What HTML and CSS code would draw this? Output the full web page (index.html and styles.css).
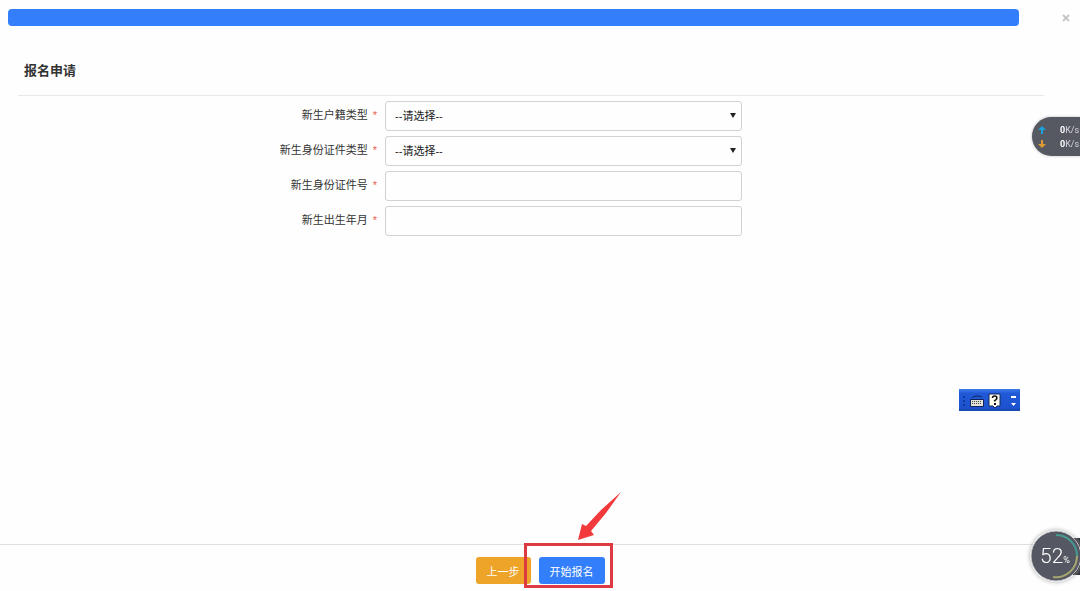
FILE: index.html
```html
<!DOCTYPE html>
<html lang="zh-CN">
<head>
  <meta charset="UTF-8">
  <meta name="viewport" content="width=device-width, initial-scale=1.0">
  <title>报名申请</title>
  <link rel="stylesheet" href="styles.css">
</head>
<body>
  <header class="topbar">
    <div class="progress"></div>
    <button type="button" class="close-btn" aria-label="关闭">
      <svg width="8" height="8" viewBox="0 0 8 8"><path d="M1 1L7 7M7 1L1 7" stroke="#c8c8c8" stroke-width="2"/></svg>
    </button>
  </header>

  <main class="content">
    <h1 class="title">报名申请</h1>
    <form class="apply-form" id="applyForm">
      <div class="form-row">
        <label for="hujiType">新生户籍类型 <span class="required">*</span></label>
        <div class="select-box">
          <select id="hujiType" class="field"><option>--请选择--</option></select>
        </div>
      </div>
      <div class="form-row">
        <label for="cardType">新生身份证件类型 <span class="required">*</span></label>
        <div class="select-box">
          <select id="cardType" class="field"><option>--请选择--</option></select>
        </div>
      </div>
      <div class="form-row">
        <label for="cardNo">新生身份证件号 <span class="required">*</span></label>
        <input id="cardNo" class="field" type="text">
      </div>
      <div class="form-row">
        <label for="birthday">新生出生年月 <span class="required">*</span></label>
        <input id="birthday" class="field" type="text">
      </div>
    </form>
  </main>

  <footer class="footer">
    <button type="button" class="btn btn-prev">上一步</button>
    <div class="highlight">
      <button type="submit" form="applyForm" class="btn btn-start">开始报名</button>
      <div class="frame"></div>
      <svg class="arrow" width="44" height="49" viewBox="0 0 44 49">
        <path d="M43 0L23 18L8 34L4 32L0 48L16 43L13 39L28 21Z" fill="#f23a3d"/>
      </svg>
    </div>
  </footer>

  <!-- network speed -->
  <div class="speed">
    <div class="speed-row">
      <svg width="8" height="8" viewBox="0 0 8 8"><path d="M4 0L8 4H5V8H3V4H0Z" fill="#1da0dc"/></svg>
      <span><b>0</b>K/s</span>
    </div>
    <div class="speed-row">
      <svg width="8" height="8" viewBox="0 0 8 8"><path d="M4 8L0 4H3V0H5V4H8Z" fill="#e09a35"/></svg>
      <span><b>0</b>K/s</span>
    </div>
  </div>

  <!-- input method bar -->
  <div class="ime-bar">
    <svg width="61" height="22" viewBox="0 0 61 22">
      <path d="M4 7h2v2H4zM4 11h2v2H4zM4 15h2v2H4z" fill="#0c3a9c"/>
      <path d="M13 9q1-2 5-2t5 1" fill="none" stroke="#12265c" stroke-width="1"/>
      <rect x="11" y="10" width="14" height="8" rx="1" fill="#12265c"/>
      <rect x="12" y="11" width="12" height="6" fill="#e4e2d6"/>
      <path d="M13 12.500h10M13 14.500h10" stroke="#3d4352" stroke-width="1" stroke-dasharray="1 1"/>
      <path d="M30 5h11v12h-3l-2 2-2-2h-4z" fill="#fffdf0" stroke="#152a5c"/>
      <path d="M33.500 9q0-2 2.200-2t2.200 2q0 1.400-2.200 2.600v1" fill="none" stroke="#111" stroke-width="1.600"/>
      <rect x="35" y="14" width="2" height="2" fill="#111"/>
      <path d="M52 7h5v2h-5z" fill="#fff"/>
      <path d="M52 14h5l-2.500 3z" fill="#fff"/>
    </svg>
  </div>

  <!-- memory usage ball -->
  <div class="ball-tail"></div>
  <div class="ball">
    <svg width="52" height="52" viewBox="0 0 52 52">
      <circle cx="26" cy="26" r="25" fill="#555762" stroke="#c9cacd" stroke-width="1"/>
      <path d="M26 5A21 21 0 0 1 47 26" fill="none" stroke="#459c91" stroke-width="2"/>
      <path d="M47 26A21 21 0 0 1 23 47" fill="none" stroke="#a5a66f" stroke-width="2"/>
    </svg>
    <div class="ball-text">52<small>%</small></div>
  </div>
</body>
</html>
```
FILE: styles.css
```css
* {
  box-sizing: border-box;
}
body {
  margin: 0;
  min-height: 100vh;
  display: flex;
  flex-direction: column;
  background: #fefefe;
  color: #333;
  font-family: "Liberation Sans", "Noto Sans CJK SC", sans-serif;
  font-size: 11px;
}
.topbar {
  display: flex;
  align-items: center;
  gap: 42px;
  padding: 9px 9px 0 8px;
}
.progress {
  flex: 1;
  height: 17px;
  background: #337ffb;
  border-radius: 4px;
}
.close-btn {
  display: flex;
  padding: 0 1px;
  border: none;
  background: none;
  cursor: pointer;
}
.content {
  flex: 1;
  padding: 32px 36px 0 18px;
}
.title {
  margin: 0;
  padding: 0 6px;
  height: 38px;
  border-bottom: 1px solid #e8e8e8;
  font-size: 13px;
  line-height: 26px;
}
.apply-form {
  display: flex;
  flex-direction: column;
  gap: 5px;
  padding-top: 5px;
}
.form-row {
  display: grid;
  grid-template-columns: 35% minmax(0, 357px);
  column-gap: 8px;
}
.form-row label {
  text-align: right;
  line-height: 28px;
}
.required {
  margin-left: 2px;
  color: #e8604c;
}
.field {
  display: block;
  width: 100%;
  height: 30px;
  padding: 0 9px;
  border: 1px solid #d2d2d2;
  border-radius: 3px;
  background: #fefefe;
  color: #222;
  font: inherit;
}
select.field {
  appearance: none;
}
.select-box {
  position: relative;
}
.select-box::after {
  content: "";
  position: absolute;
  top: 12px;
  right: 6px;
  border: 3px solid transparent;
  border-top: 5px solid #222;
  border-bottom: none;
  pointer-events: none;
}
.footer {
  display: flex;
  justify-content: center;
  gap: 8px;
  padding: 12px 0 7px;
  border-top: 1px solid #dfdfdf;
}
.btn {
  display: block;
  height: 27px;
  padding: 0 11px;
  border: none;
  border-radius: 3px;
  color: #fff;
  font: inherit;
  cursor: pointer;
}
.btn-prev {
  background: #eda429;
}
.btn-start {
  background: #337ffb;
}
.highlight {
  position: relative;
}
.frame {
  position: absolute;
  top: -14px;
  right: -8px;
  bottom: -4px;
  left: -15px;
  border: 3px solid #de3a42;
  pointer-events: none;
}
.arrow {
  position: absolute;
  left: 39px;
  bottom: 43px;
}
.speed {
  position: fixed;
  top: 117px;
  right: 0;
  width: 48px;
  height: 39px;
  padding: 6px 0 0 6px;
  border-radius: 20px 0 0 20px;
  background: #565862;
  box-shadow: 0 0 3px #bbb;
  color: #d5d5d9;
  font-family: Roboto, sans-serif;
  font-size: 9px;
  line-height: 14px;
}
.speed-row {
  display: flex;
  align-items: center;
  gap: 14px;
  white-space: nowrap;
}
.speed-row svg {
  flex: none;
}
.speed-row b {
  color: #fff;
}
.ime-bar {
  position: fixed;
  top: 389px;
  right: 60px;
  height: 22px;
  background: linear-gradient(#3a7be8, #2159d6 20%, #1d52cf 85%, #1846ac);
}
.ime-bar svg {
  display: block;
}
.ball-tail {
  position: fixed;
  right: 0;
  bottom: 16px;
  width: 20px;
  height: 37px;
  background: #2d3036;
}
.ball {
  position: fixed;
  right: -2px;
  bottom: 9px;
  width: 52px;
  height: 52px;
  border-radius: 50%;
  box-shadow: 0 0 4px #aaa;
}
.ball-text {
  position: absolute;
  top: 0;
  left: 10px;
  color: #fff;
  font-family: Roboto, sans-serif;
  font-size: 21px;
  font-weight: 300;
  line-height: 52px;
}
.ball-text small {
  font-size: 9px;
  font-weight: 400;
}
```
